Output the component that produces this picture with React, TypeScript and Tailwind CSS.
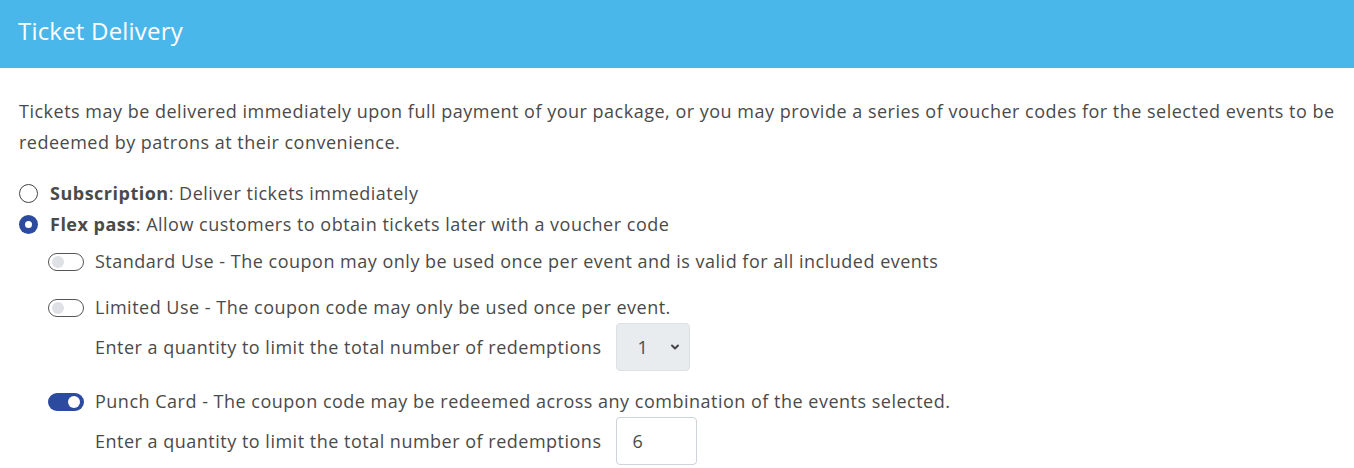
import React from 'react';

const Toggle: React.FC<{ on?: boolean }> = ({ on }) =>
  on ? (
    <span className="relative inline-flex h-[18px] w-[36px] shrink-0 items-center rounded-full bg-[#2c4b9f]">
      <span className="absolute right-[4px] h-[12px] w-[12px] rounded-full bg-white" />
    </span>
  ) : (
    <span className="relative inline-flex h-[18px] w-[36px] shrink-0 items-center rounded-full border border-[#555] bg-white">
      <span className="absolute left-[3px] h-[12px] w-[12px] rounded-full bg-[#dee1e6]" />
    </span>
  );

const Radio: React.FC<{ checked?: boolean }> = ({ checked }) =>
  checked ? (
    <span className="flex h-[19px] w-[19px] shrink-0 items-center justify-center rounded-full bg-[#2c4b9f]">
      <span className="h-[7px] w-[7px] rounded-full bg-white" />
    </span>
  ) : (
    <span className="h-[19px] w-[19px] shrink-0 rounded-full border border-[#444] bg-white" />
  );

export default function App() {
  return (
    <div className="min-h-[468px] bg-white text-[#4a4a4a]" style={{ fontFamily: '"Open Sans", Lato, sans-serif' }}>
      <div className="flex h-[68px] items-center bg-[#4ab7eb] px-[18px] pb-[6px]">
        <h1 className="text-[24px] tracking-[0.2px] text-white">Ticket Delivery</h1>
      </div>
      <div className="px-[19px] pt-[28px] text-[18px] tracking-[0.5px]">
        <p className="leading-[31px]">
          Tickets may be delivered immediately upon full payment of your package, or you may provide a series of voucher codes for the selected events to be redeemed by patrons at their convenience.
        </p>
        <div className="mt-[20px] flex flex-col">
          <label className="flex h-[31px] items-center gap-[12px]">
            <Radio />
            <span><b className="font-bold">Subscription</b>: Deliver tickets immediately</span>
          </label>
          <label className="flex h-[31px] items-center gap-[12px]">
            <Radio checked />
            <span><b className="font-bold">Flex pass</b>: Allow customers to obtain tickets later with a voucher code</span>
          </label>
        </div>
        <div className="ml-[29px] mt-[6px] flex flex-col">
          <div className="flex h-[31px] items-center gap-[11px]">
            <Toggle />
            <span>Standard Use - The coupon may only be used once per event and is valid for all included events</span>
          </div>
          <div className="mt-[15px] flex h-[31px] items-center gap-[11px]">
            <Toggle />
            <span>Limited Use - The coupon code may only be used once per event.</span>
          </div>
          <div className="ml-[47px] flex items-center gap-[15px]">
            <span>Enter a quantity to limit the total number of redemptions</span>
            <div className="flex h-[48px] w-[74px] items-center justify-between rounded-[4px] border border-[#dde0e4] bg-[#e9ecef] pl-[20px] pr-[8px]">
              <span>1</span>
              <svg width="12" height="12" viewBox="0 0 12 12" fill="none" stroke="#444" strokeWidth="2" strokeLinecap="round" strokeLinejoin="round">
                <path d="M3 4.5 6 7.5 9 4.5" />
              </svg>
            </div>
          </div>
          <div className="mt-[15px] flex h-[31px] items-center gap-[11px]">
            <Toggle on />
            <span>Punch Card - The coupon code may be redeemed across any combination of the events selected.</span>
          </div>
          <div className="ml-[47px] flex items-center gap-[15px]">
            <span>Enter a quantity to limit the total number of redemptions</span>
            <div className="flex h-[48px] w-[81px] items-center rounded-[4px] border border-[#ced4da] bg-white pl-[15px]">
              <span>6</span>
            </div>
          </div>
        </div>
      </div>
    </div>
  );
}
